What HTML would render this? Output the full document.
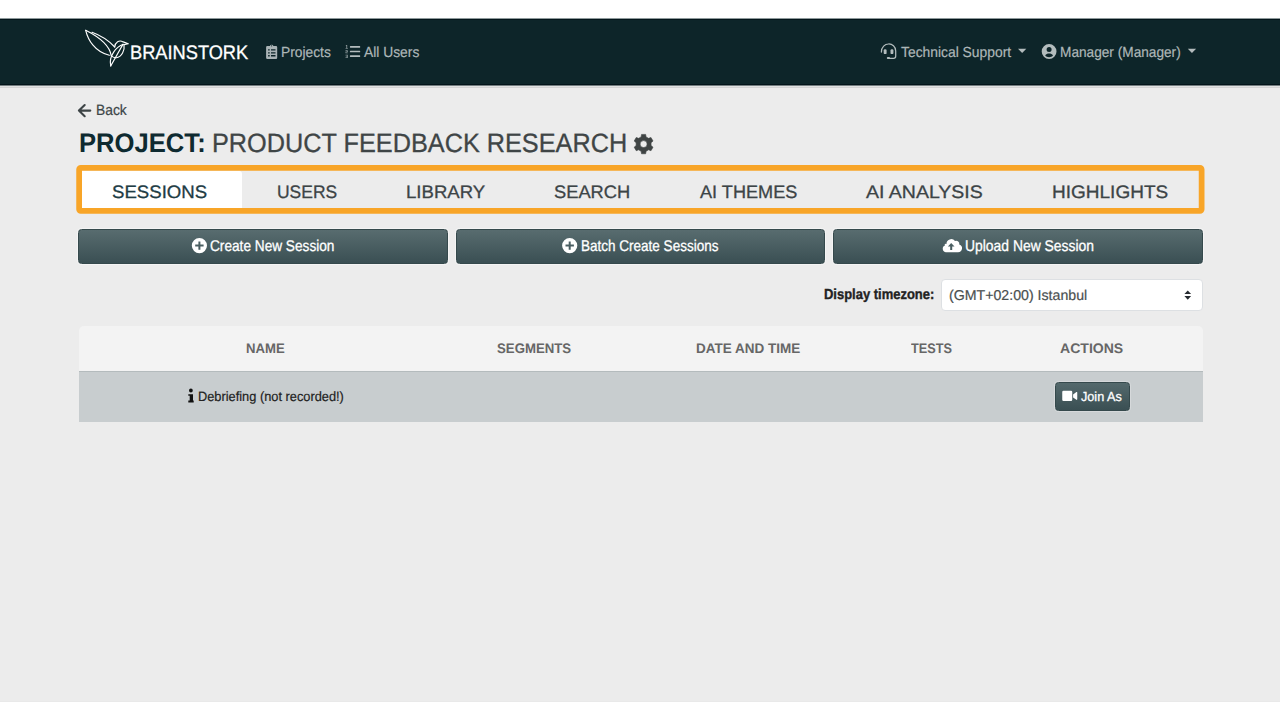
<!DOCTYPE html>
<html lang="en">
<head>
<meta charset="utf-8">
<title>Brainstork - Project: Product Feedback Research</title>
<style>
*{box-sizing:border-box;margin:0;padding:0}
html,body{width:1280px;height:720px;overflow:hidden;background:#fff}
body{font-family:"Liberation Sans",sans-serif;color:#2a3a3d;position:relative}
.bg{position:absolute;left:0;top:18px;width:1280px;height:684px;background:#ececec}
.r{position:absolute;left:0;width:1280px;height:1px}
.nav{position:absolute;left:0;top:20px;width:1280px;height:64px;background:#0d2529}
.t{position:absolute;white-space:nowrap;transform-origin:0 0;font-family:"Liberation Sans",sans-serif;text-rendering:geometricPrecision}
svg.ic{position:absolute;left:0;top:0;width:1280px;height:720px;overflow:visible;pointer-events:none}
.tabsel{position:absolute;left:82px;top:171px;width:160px;height:37px;background:#fff;border-radius:0 3px 0 0}
.btn{position:absolute;top:229px;height:35px;border-radius:3.5px;background:linear-gradient(#586c6f,#3a4f53);border:1px solid #35494c;box-shadow:0 0 0 1px rgba(255,255,255,.45)}
.select{position:absolute;left:941px;top:279px;width:261.5px;height:32px;background:#fff;border:1px solid #dde0e3;border-radius:4px}
.thead{position:absolute;left:78.5px;top:326px;width:1124px;height:45px;background:#f3f3f3;border-radius:5px 5px 0 0}
.tline{position:absolute;left:78.5px;top:371px;width:1124px;height:1px;background:#b4bbbd}
.trow{position:absolute;left:78.5px;top:372px;width:1124px;height:50px;background:#c8cdcf}
.join{position:absolute;left:1054.5px;top:381.7px;width:75px;height:29px;border-radius:3.5px;background:linear-gradient(#54696c,#3a4f53);border:1px solid #35494c;box-shadow:0 0 0 1px rgba(255,255,255,.25)}
</style>
</head>
<body>
<div class="bg"></div>
<div class="r" style="top:18px;background:#8e999b"></div>
<div class="r" style="top:19px;background:#03141a"></div>
<div class="nav"></div>
<div class="r" style="top:84px;background:#03141a"></div>
<div class="r" style="top:85px;background:#727d7f"></div>
<div class="r" style="top:86px;background:#e1e1e1"></div>
<div class="r" style="top:87px;background:#d4d4d4"></div>
<div class="r" style="top:701px;background:#e9e9e9"></div>

<div class="tabsel"></div>
<div class="btn" style="left:78px;width:369.7px"></div>
<div class="btn" style="left:455.6px;width:369.6px"></div>
<div class="btn" style="left:833.2px;width:369.6px"></div>
<div class="select"></div>
<div class="thead"></div>
<div class="tline"></div>
<div class="trow"></div>
<div class="join"></div>

<svg class="ic" viewBox="0 0 1280 720">
  <!-- orange highlight frame around tabs -->
  <path fill="#f8a528" fill-rule="evenodd" d="M80.75 165.0 H1200.0 A4.5 4.5 0 0 1 1204.5 169.5 V209.2 A4.5 4.5 0 0 1 1200.0 213.7 H80.75 A4.5 4.5 0 0 1 76.25 209.2 V169.5 A4.5 4.5 0 0 1 80.75 165.0 Z M82.0 170.8 V207.9 H1198.75 V170.8 Z"/>

  <!-- hummingbird logo -->
  <g fill="none" stroke="#fff" stroke-width="1.15" stroke-linecap="round" stroke-linejoin="round">
    <path d="M85.7 30.3 C88 40 95 52 109.3 55.3"/>
    <path d="M85.7 30.3 C97 36 109.500 45 111.200 55.500"/>
    <path d="M92 32.300 C101 35.500 110 42 114.700 47"/>
    <path d="M114.7 47 C115.2 42 119.2 39.6 123.2 41.9 L128.3 43.7 L124 44.6"/>
    <path d="M124 44.6 C125 50 121.8 57 116.2 57.7 C114 57.9 112.3 57 111.3 55.5"/>
    <path d="M123.3 44.3 C117 46.5 108.5 55 110.7 66"/>
    <path d="M122.9 44.4 L110.7 66"/>
  </g>

  <!-- clipboard-list -->
  <g fill="#a9b3b5">
    <path fill-rule="evenodd" d="M267.300 46.100 h2.600 a1.800 1.800 0 0 1 3.500 0 h2.600 a1.200 1.200 0 0 1 1.200 1.200 v10.400 a1.200 1.200 0 0 1 -1.200 1.200 h-8.700 a1.200 1.200 0 0 1 -1.200 -1.200 v-10.400 a1.200 1.200 0 0 1 1.200 -1.200 z M268.100 49.300 h1.600 v1.300 h-1.600 z M271 49.300 h4.500 v1.300 h-4.500 z M268.100 52.200 h1.600 v1.300 h-1.600 z M271 52.200 h4.500 v1.300 h-4.500 z M268.100 55.100 h1.600 v1.300 h-1.600 z M271 55.100 h4.500 v1.300 h-4.500 z M271 45.800 a0.600 0.600 0 1 0 1.200 0 a0.600 0.600 0 1 0 -1.200 0 z"/>
  </g>
  <!-- list-ol -->
  <g fill="#b3bcbd">
    <rect x="349.900" y="46.100" width="10.300" height="1.600" rx="0.400"/>
    <rect x="349.900" y="50.750" width="10.300" height="1.600" rx="0.400"/>
    <rect x="349.900" y="55.350" width="10.300" height="1.600" rx="0.400"/>
    <g opacity="0.75">
      <path d="M346.200 45.100 h1 v3 h0.600 v0.700 h-2.200 v-0.700 h0.700 v-2.200 h-0.700 z"/>
      <path d="M345.500 50.200 h2.300 v1.800 h-1.500 v0.500 h1.500 v0.700 h-2.300 v-1.800 h1.500 v-0.500 h-1.500 z"/>
      <path d="M345.500 54.700 h2.300 v3.200 h-2.300 v-0.700 h1.500 v-0.600 h-1.200 v-0.600 h1.200 v-0.600 h-1.500 z"/>
    </g>
  </g>
  <!-- headset -->
  <g fill="none" stroke="#b3bcbd" stroke-width="1.250" stroke-linecap="round">
    <path d="M881.400 52 C881.400 41.500 895.700 41.500 895.700 51 V56.200 C895.700 57.800 894.800 58.300 893.600 58.300 H888.200"/>
  </g>
  <g fill="#b3bcbd">
    <rect x="883.700" y="49.300" width="2.900" height="4.800" rx="1.200"/>
    <rect x="890.500" y="49.300" width="2.900" height="4.800" rx="1.200"/>
    <rect x="886.800" y="57.100" width="3.200" height="2" rx="1"/>
  </g>
  <!-- carets -->
  <path d="M1018 48.700 h8.300 l-4.150 4.400 z" fill="#b3bcbd"/>
  <path d="M1187.800 48.700 h8.300 l-4.150 4.400 z" fill="#b3bcbd"/>
  <!-- user-circle -->
  <path fill="#b3bcbd" fill-rule="evenodd" d="M1041.700 51.500 a7.400 7.400 0 1 0 14.800 0 a7.400 7.400 0 1 0 -14.800 0 z M1046.600 49.400 a2.500 2.500 0 1 0 5 0 a2.500 2.500 0 1 0 -5 0 z M1045.200 55.600 c0.800 -1.500 2.300 -2 3.900 -2 c1.600 0 3.100 0.500 3.900 2 c-0.900 1.100 -2.300 1.700 -3.900 1.700 c-1.600 0 -3 -0.600 -3.900 -1.700 z"/>

  <!-- back arrow -->
  <path d="M84.700 105 L78.900 110.600 L84.700 116.200 M79.300 110.600 H90.300" fill="none" stroke="#3d4446" stroke-width="2.1" stroke-linecap="round" stroke-linejoin="round"/>

  <!-- gear -->
  <path fill="#3f4444" fill-rule="evenodd" stroke="#3f4444" stroke-width="0.6" stroke-linejoin="round" d="M646.07 136.91 L645.66 134.42 L641.54 134.42 L641.13 136.91 L638.61 138.36 L636.24 137.48 L634.18 141.04 L636.14 142.65 L636.14 145.55 L634.18 147.16 L636.24 150.72 L638.61 149.84 L641.13 151.29 L641.54 153.78 L645.66 153.78 L646.07 151.29 L648.59 149.84 L650.96 150.72 L653.02 147.16 L651.06 145.55 L651.06 142.65 L653.02 141.04 L650.96 137.48 L648.59 138.36 Z M640.10 144.10 a3.5 3.5 0 1 0 7.0 0 a3.5 3.5 0 1 0 -7.0 0 z"/>

  <!-- plus-circles -->
  <path fill="#fff" fill-rule="evenodd" d="M191.800 245.600 a7.600 7.600 0 1 0 15.200 0 a7.600 7.600 0 1 0 -15.200 0 z M198.400 241.400 h2 v3.200 h3.200 v2 h-3.200 v3.200 h-2 v-3.200 h-3.200 v-2 h3.200 z"/>
  <path fill="#fff" fill-rule="evenodd" d="M562.100 245.600 a7.600 7.600 0 1 0 15.200 0 a7.600 7.600 0 1 0 -15.200 0 z M568.700 241.400 h2 v3.200 h3.200 v2 h-3.200 v3.200 h-2 v-3.200 h-3.200 v-2 h3.200 z"/>
  <!-- cloud-upload -->
  <path fill="#fff" fill-rule="evenodd" d="M946 252.200 a3.400 3.400 0 0 1 -1 -6.600 a1 1 0 0 1 1.500 -1.500 a4.700 4.700 0 0 1 8.500 -3 a3 3 0 0 1 4.300 3.300 a4 4 0 0 1 -1.300 7.800 z M951.200 243.100 l3.300 3.300 h-2.300 v3.500 h-2 v-3.500 h-2.300 z"/>

  <!-- select arrows -->
  <path d="M1184.400 294 h6.700 l-3.350 -3.600 z M1184.400 296.100 h6.700 l-3.350 3.600 z" fill="#262b30"/>

  <!-- info -->
  <path fill="#111" d="M189 390.5 a1.9 1.9 0 1 0 3.8 0 a1.9 1.9 0 1 0 -3.8 0 z M188.3 394.2 h4.7 v6.2 h0.7 v2.1 h-5.4 v-2.1 h1.4 v-4.7 h-1.4 z"/>

  <!-- video -->
  <path fill="#fff" d="M1063.500 390.750 h7.500 a1.250 1.250 0 0 1 1.250 1.250 v7.750 a1.250 1.250 0 0 1 -1.250 1.250 h-7.500 a1.250 1.250 0 0 1 -1.250 -1.250 v-7.750 a1.250 1.250 0 0 1 1.250 -1.250 z M1073.100 394.400 l3.300 -2.400 a0.550 0.550 0 0 1 0.850 0.450 v6.900 a0.550 0.550 0 0 1 -0.850 0.450 l-3.300 -2.400 z"/>
</svg>

<div class="t" style="left:130.40px;top:43px;font-size:19.55px;line-height:21.84px;font-weight:normal;color:#ffffff;transform:scaleX(0.9335);-webkit-text-stroke:0.3px #ffffff;">BRAINSTORK</div>
<div class="t" style="left:280.95px;top:45px;font-size:14.61px;line-height:16.32px;font-weight:normal;color:#adb7b8;transform:scaleX(0.9445);-webkit-text-stroke:0.2px #adb7b8;">Projects</div>
<div class="t" style="left:364.35px;top:45px;font-size:14.61px;line-height:16.32px;font-weight:normal;color:#adb7b8;transform:scaleX(0.9461);-webkit-text-stroke:0.2px #adb7b8;">All Users</div>
<div class="t" style="left:900.50px;top:45px;font-size:14.61px;line-height:16.32px;font-weight:normal;color:#adb7b8;transform:scaleX(0.9480);-webkit-text-stroke:0.2px #adb7b8;">Technical Support</div>
<div class="t" style="left:1060.10px;top:45px;font-size:14.61px;line-height:16.32px;font-weight:normal;color:#adb7b8;transform:scaleX(0.9349);-webkit-text-stroke:0.2px #adb7b8;">Manager (Manager)</div>
<div class="t" style="left:95.85px;top:103px;font-size:14.97px;line-height:16.72px;font-weight:normal;color:#3d4648;transform:scaleX(0.9239);-webkit-text-stroke:0.2px #3d4648;">Back</div>
<div class="t" style="left:78.90px;top:128px;font-size:26.89px;line-height:30.04px;font-weight:bold;color:#0e2a30;transform:scaleX(0.9533);">PROJECT:</div>
<div class="t" style="left:212.40px;top:129px;font-size:26.45px;line-height:29.55px;font-weight:normal;color:#3f4546;transform:scaleX(0.9559);-webkit-text-stroke:0.3px #3f4546;">PRODUCT FEEDBACK RESEARCH</div>
<div class="t" style="left:112.40px;top:182px;font-size:18.10px;line-height:20.21px;font-weight:normal;color:#1f3d45;transform:scaleX(1.0290);-webkit-text-stroke:0.3px #1f3d45;">SESSIONS</div>
<div class="t" style="left:276.90px;top:182px;font-size:18.10px;line-height:20.21px;font-weight:normal;color:#3c4446;transform:scaleX(0.9656);-webkit-text-stroke:0.3px #3c4446;">USERS</div>
<div class="t" style="left:406.40px;top:182px;font-size:18.10px;line-height:20.21px;font-weight:normal;color:#3c4446;transform:scaleX(1.0271);-webkit-text-stroke:0.3px #3c4446;">LIBRARY</div>
<div class="t" style="left:554.40px;top:182px;font-size:18.10px;line-height:20.21px;font-weight:normal;color:#3c4446;transform:scaleX(1.0105);-webkit-text-stroke:0.3px #3c4446;">SEARCH</div>
<div class="t" style="left:700.30px;top:182px;font-size:18.10px;line-height:20.21px;font-weight:normal;color:#3c4446;transform:scaleX(1.0010);-webkit-text-stroke:0.3px #3c4446;">AI THEMES</div>
<div class="t" style="left:866.15px;top:182px;font-size:18.10px;line-height:20.21px;font-weight:normal;color:#3c4446;transform:scaleX(1.0782);-webkit-text-stroke:0.3px #3c4446;">AI ANALYSIS</div>
<div class="t" style="left:1052.40px;top:182px;font-size:18.10px;line-height:20.21px;font-weight:normal;color:#3c4446;transform:scaleX(1.0507);-webkit-text-stroke:0.3px #3c4446;">HIGHLIGHTS</div>
<div class="t" style="left:209.90px;top:238px;font-size:15.55px;line-height:17.37px;font-weight:normal;color:#ffffff;transform:scaleX(0.8781);-webkit-text-stroke:0.3px #ffffff;">Create New Session</div>
<div class="t" style="left:581.40px;top:238px;font-size:15.55px;line-height:17.37px;font-weight:normal;color:#ffffff;transform:scaleX(0.8691);-webkit-text-stroke:0.3px #ffffff;">Batch Create Sessions</div>
<div class="t" style="left:964.90px;top:238px;font-size:15.55px;line-height:17.37px;font-weight:normal;color:#ffffff;transform:scaleX(0.8935);-webkit-text-stroke:0.3px #ffffff;">Upload New Session</div>
<div class="t" style="left:824.20px;top:287px;font-size:14.54px;line-height:16.24px;font-weight:bold;color:#222222;transform:scaleX(0.8928);-webkit-text-stroke:0.35px #222;">Display timezone:</div>
<div class="t" style="left:949.40px;top:289px;font-size:14.24px;line-height:15.91px;font-weight:normal;color:#4a4f50;transform:scaleX(0.9953);-webkit-text-stroke:0.2px #4a4f50;">(GMT+02:00) Istanbul</div>
<div class="t" style="left:246.40px;top:341px;font-size:13.81px;line-height:15.42px;font-weight:bold;color:#666666;transform:scaleX(0.9526);">NAME</div>
<div class="t" style="left:496.90px;top:341px;font-size:13.81px;line-height:15.42px;font-weight:bold;color:#666666;transform:scaleX(0.9582);">SEGMENTS</div>
<div class="t" style="left:696.40px;top:341px;font-size:13.81px;line-height:15.42px;font-weight:bold;color:#666666;transform:scaleX(0.9780);">DATE AND TIME</div>
<div class="t" style="left:910.85px;top:341px;font-size:13.81px;line-height:15.42px;font-weight:bold;color:#666666;transform:scaleX(0.9220);">TESTS</div>
<div class="t" style="left:1060.20px;top:341px;font-size:13.81px;line-height:15.42px;font-weight:bold;color:#666666;transform:scaleX(1.0186);">ACTIONS</div>
<div class="t" style="left:198.10px;top:389px;font-size:13.52px;line-height:15.10px;font-weight:normal;color:#222222;transform:scaleX(0.9473);-webkit-text-stroke:0.2px #222222;">Debriefing (not recorded!)</div>
<div class="t" style="left:1081.20px;top:390px;font-size:13.08px;line-height:14.61px;font-weight:normal;color:#ffffff;transform:scaleX(0.9675);-webkit-text-stroke:0.3px #ffffff;">Join As</div>

</body>
</html>
